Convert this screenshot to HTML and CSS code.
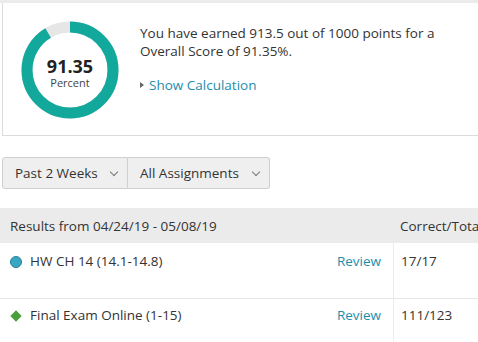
FILE: index.html
```html
<html>
<head>
  <meta charset="UTF-8">
  <meta name="viewport" content="width=device-width, initial-scale=1.0">
  <title>Overall Score</title>
  <link rel="stylesheet" href="styles.css">
</head>
<body>
  <div class="page">
    <div class="score-card">
      <div class="donut">
        <svg width="98" height="98" viewBox="0 0 98 98">
          <circle cx="49" cy="49" r="43" fill="none" stroke="#e6e6e6" stroke-width="11"/>
          <!-- 91.35% of circumference 270.18 = 246.8 -->
          <circle cx="49" cy="49" r="43" fill="none" stroke="#13a89c" stroke-width="11"
                  stroke-dasharray="246.8 270.2" transform="rotate(-90 49 49)"/>
        </svg>
        <div class="donut-label">
          <div class="donut-value">91.35</div>
          <div class="donut-unit">Percent</div>
        </div>
      </div>
      <div class="score-text">
        <p>You have earned 913.5 out of 1000 points for a Overall Score of 91.35%.</p>
        <a href="#" class="calc-link"><span class="caret"></span>Show Calculation</a>
      </div>
    </div>

    <div class="filters">
      <button class="select select-period">Past 2 Weeks <span class="chev"></span></button>
      <button class="select select-type">All Assignments <span class="chev"></span></button>
    </div>

    <div class="results">
      <div class="row-head">
        <div class="cell-main">Results from 04/24/19 - 05/08/19</div>
        <div class="cell-score">Correct/Total</div>
      </div>
      <div class="row">
        <div class="cell-main">
          <span class="icon-circle"></span>
          <span class="title">HW CH 14 (14.1-14.8)</span>
          <a href="#" class="review">Review</a>
        </div>
        <div class="cell-score">17/17</div>
      </div>
      <div class="row">
        <div class="cell-main">
          <span class="icon-diamond"></span>
          <span class="title">Final Exam Online (1-15)</span>
          <a href="#" class="review">Review</a>
        </div>
        <div class="cell-score">111/123</div>
      </div>
    </div>
  </div>
</body>
</html>
```

FILE: styles.css
```css
body {
  margin: 0;
  font-family: "Open Sans", Arial, sans-serif;
  color: #333;
  background-color: #fff;
  overflow: hidden;
}

.page {
  width: 560px;
  border-top: 3px solid #ebebeb;
}

.score-card {
  display: flex;
  margin-left: 2px;
  height: 132px;
  border: 1px solid #dcdcdc;
  border-top: none;
  background-color: #fff;
}

.donut {
  position: relative;
  width: 98px;
  height: 98px;
  margin: 18px 0 0 18px;
}

.donut svg {
  display: block;
}

.donut-label {
  position: absolute;
  top: 0;
  left: 0;
  width: 98px;
  padding-top: 35px;
  text-align: center;
}

.donut-value {
  font-size: 18px;
  font-weight: bold;
  line-height: 20px;
  color: #222;
}

.donut-unit {
  font-size: 11px;
  line-height: 13px;
  color: #444;
}

.score-text {
  width: 310px;
  margin: 21px 0 0 21px;
}

.score-text p {
  margin: 0 0 16px 0;
  font-size: 13.5px;
  line-height: 18px;
}

.calc-link {
  font-size: 13.5px;
  color: #1d8eac;
  text-decoration: none;
}

.caret {
  display: inline-block;
  width: 0;
  height: 0;
  margin-right: 5px;
  vertical-align: 2px;
  border-left: 4px solid #666;
  border-top: 3px solid transparent;
  border-bottom: 3px solid transparent;
}

.filters {
  display: flex;
  margin: 21px 0 0 2px;
}

.select {
  display: flex;
  align-items: center;
  justify-content: space-between;
  height: 32px;
  padding: 0 10px 0 12px;
  font-family: inherit;
  font-size: 13.5px;
  color: #333;
  background-color: #efefef;
  border: 1px solid #cfcfcf;
}

.select-period {
  width: 126px;
  border-radius: 3px 0 0 3px;
}

.select-type {
  width: 142px;
  border-left: none;
  border-radius: 0 3px 3px 0;
}

.chev {
  display: inline-block;
  width: 5px;
  height: 5px;
  margin-bottom: 3px;
  border-right: 1px solid #777;
  border-bottom: 1px solid #777;
  transform: rotate(45deg);
}

.results {
  margin-top: 19px;
  font-size: 13.5px;
}

.row-head {
  display: flex;
  align-items: center;
  height: 35px;
  background-color: #ebebeb;
}

.row {
  display: flex;
  height: 55px;
  border-bottom: 1px solid #e6e6e6;
}

.cell-main {
  display: flex;
  align-items: flex-start;
  width: 371px;
  padding: 0 12px 0 10px;
}

.cell-score {
  flex: 1;
  padding-left: 7px;
}

.row .cell-main,
.row .cell-score {
  padding-top: 9px;
}

.row + .row .cell-main,
.row + .row .cell-score {
  padding-top: 7px;
}

.row .cell-score {
  border-left: 1px solid #ececec;
}

.title {
  flex: 1;
}

.icon-circle {
  width: 10px;
  height: 10px;
  margin: 4px 8px 0 0;
  border-radius: 50%;
  background-color: #3aa7c2;
  border: 1px solid #23819a;
}

.icon-diamond {
  width: 8px;
  height: 8px;
  margin: 6px 10px 0 2px;
  background-color: #4b9e3c;
  transform: rotate(45deg);
}

.review {
  color: #1d8eac;
  text-decoration: none;
}
```
